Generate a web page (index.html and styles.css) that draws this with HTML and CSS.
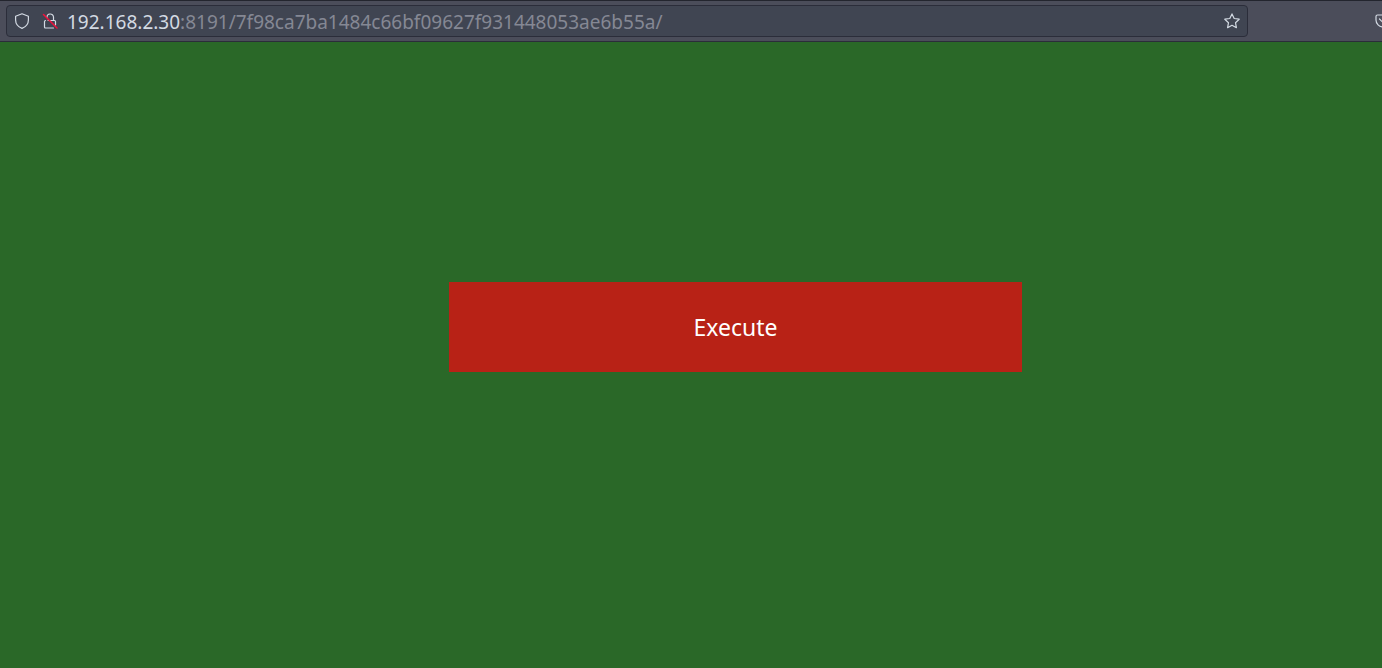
FILE: index.html
```html
<!DOCTYPE html>
<html lang="en">
<head>
<meta charset="utf-8">
<meta name="viewport" content="width=device-width, initial-scale=1">
<title>Execute</title>
<link rel="stylesheet" href="styles.css">
</head>
<body>
<header class="toolbar">
  <form class="address">
    <button class="icon-button" type="button" aria-label="Tracking protection">
      <svg class="icon" viewBox="0 0 16 16"><path d="M8 .8 14.400 3.200V7c0 4-2.500 6.800-6.400 8.400C4.100 13.800 1.600 11 1.600 7V3.200Z"/></svg>
    </button>
    <button class="icon-button" type="button" aria-label="Connection not secure">
      <svg class="icon" viewBox="0 0 16 16"><path d="M5 4.500A3.200 3.200 0 0 1 11.500 4v3.500M6 7.500h6.500a1 1 0 0 1 1 1V12M11.500 15h-8a1 1 0 0 1-1-1V8.500a1 1 0 0 1 1-1"/><path class="strike" d="m1.500 1.500 13.500 13.500"/></svg>
    </button>
    <label class="host" for="path">192.168.2.30</label>
    <input class="path" id="path" type="text" spellcheck="false" value=":8191/7f98ca7ba1484c66bf09627f931448053ae6b55a/">
    <button class="icon-button" type="button" aria-label="Bookmark this page">
      <svg class="icon" viewBox="0 0 16 16"><path d="m8 .9 2.200 4.600 5 .7-3.700 3.500.9 5L8 12.300l-4.400 2.400.9-5L.8 6.200l5-.7Z"/></svg>
    </button>
  </form>
  <button class="icon-button pocket" type="button" aria-label="Save to Pocket">
    <svg class="icon" viewBox="0 0 16 16"><path d="M2.500 2h11a1.500 1.500 0 0 1 1.500 1.500V7A7 7 0 0 1 1 7V3.500A1.500 1.500 0 0 1 2.500 2Z"/><path d="m4.500 6 3.500 3.500L11.500 6"/></svg>
  </button>
</header>
<main class="page">
  <button class="execute" type="button">Execute</button>
</main>
</body>
</html>
```
FILE: styles.css
```css
* {
  box-sizing: border-box;
}

body {
  display: flex;
  flex-direction: column;
  min-height: 100vh;
  margin: 0;
  overflow-x: hidden;
  background: #2a6828;
  font-family: "Noto Sans", sans-serif;
}

button {
  border: 0;
  padding: 0;
  font: inherit;
}

.toolbar {
  display: flex;
  align-items: center;
  justify-content: space-between;
  height: 42px;
  padding-left: 6px;
  overflow: hidden;
  border-top: 1px solid #23252e;
  border-bottom: 1px solid #2b2d3a;
  background: #4b4d5a;
}

.address {
  display: flex;
  flex: 1;
  align-items: center;
  height: 32px;
  margin-right: 127px;
  padding: 0 7px;
  border: 1px solid #2b2d3a;
  border-radius: 4px;
  background: #404552;
  font-size: 19px;
  line-height: 26px;
}

.icon-button {
  display: flex;
  flex: none;
  background: transparent;
  color: #d3dae3;
}

.icon-button + .icon-button {
  margin-left: 12px;
}

.icon {
  width: 16px;
  height: 16px;
  fill: none;
  stroke: currentColor;
  stroke-width: 1.2;
  stroke-linejoin: round;
  stroke-linecap: round;
}

.strike {
  stroke: #f0103c;
  stroke-width: 1.5;
}

.host,
.path {
  padding: 2px 0 0;
}

.host {
  margin-left: 9px;
  color: #d3dae3;
}

.path {
  flex: 1;
  min-width: 0;
  border: 0;
  outline: 0;
  background: transparent;
  color: #858894;
  font: inherit;
}

.pocket {
  margin-right: -9px;
}

.page {
  display: flex;
  flex: 1;
  align-items: flex-start;
  justify-content: center;
  padding: 240px 0 0 89px;
}

.execute {
  width: 573px;
  max-width: 100%;
  padding: 29px 16px;
  background: #b82216;
  color: #fff;
  font-size: 23px;
  line-height: 32px;
}
```
